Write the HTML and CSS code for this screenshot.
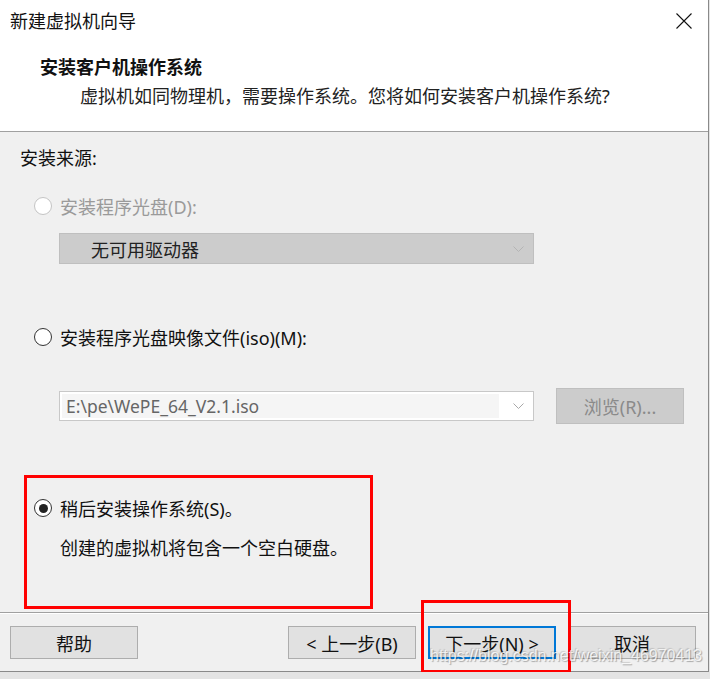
FILE: index.html
```html
<!DOCTYPE html>
<html lang="zh-CN">
<head>
    <meta charset="UTF-8">
    <meta name="viewport" content="width=device-width, initial-scale=1.0">
    <title>新建虚拟机向导</title>
    <link rel="stylesheet" href="styles.css">
</head>
<body>

    <div class="window">

        <!-- Header -->
        <header class="header">
            <div class="titlebar">
                <span class="title">新建虚拟机向导</span>
                <svg class="close" width="16" height="16" viewBox="0 0 16 16">
                    <path d="M0.5 0.5 L15.5 15.5 M15.5 0.5 L0.5 15.5" stroke="#111" stroke-width="1.1" fill="none"/>
                </svg>
            </div>
            <div class="heading">安装客户机操作系统</div>
            <div class="subtitle">虚拟机如同物理机，需要操作系统。您将如何安装客户机操作系统?</div>
        </header>

        <!-- Options -->
        <section class="content">
            <div class="source-label">安装来源:</div>

            <div class="radio-row disabled row-disc">
                <span class="radio"></span>
                <span class="label">安装程序光盘(D):</span>
            </div>
            <div class="select">
                <span class="select-text">无可用驱动器</span>
                <svg class="arrow" width="11" height="6" viewBox="0 0 11 6">
                    <polyline points="0.5,0.5 5.5,5.5 10.5,0.5" stroke="#b4b4b4" fill="none"/>
                </svg>
            </div>

            <div class="radio-row row-iso">
                <span class="radio"></span>
                <span class="label">安装程序光盘映像文件(iso)(M):</span>
            </div>
            <div class="combo-row">
                <div class="combo">
                    <span class="combo-field">E:\pe\WePE_64_V2.1.iso</span>
                    <svg class="arrow" width="11" height="6" viewBox="0 0 11 6">
                        <polyline points="0.5,0.5 5.5,5.5 10.5,0.5" stroke="#a8a8a8" fill="none"/>
                    </svg>
                </div>
                <div class="browse">浏览(R)...</div>
            </div>

            <div class="later-box">
                <div class="radio-row">
                    <span class="radio checked"></span>
                    <span class="label">稍后安装操作系统(S)。</span>
                </div>
                <div class="later-note">创建的虚拟机将包含一个空白硬盘。</div>
            </div>
        </section>

        <!-- Footer buttons -->
        <footer class="footer">
            <button class="btn">帮助</button>
            <div class="footer-right">
                <button class="btn">&lt; 上一步(B)</button>
                <button class="btn btn-default">下一步(N) &gt;</button>
                <button class="btn">取消</button>
            </div>
        </footer>

        <div class="mark-next"></div>
        <div class="watermark">https://blog.csdn.net/weixin_46970413</div>
    </div>

</body>
</html>
```

FILE: styles.css
```css
/* General Styles */
body {
    margin: 0;
    padding: 0;
    background-color: #e4e4e4;
    font-family: "Noto Sans", "Noto Sans CJK SC", sans-serif;
    font-size: 18px;
    color: #111;
}

.window {
    position: relative;
    width: 708px;
    height: 671px;
    background-color: #f0f0f0;
    border-right: 1px solid #8a8a8a;
    border-bottom: 1px solid #8a8a8a;
}

/* Header */
.header {
    height: 131px;
    background-color: #fff;
    border-bottom: 1px solid #a0a0a0;
}

.titlebar {
    height: 42px;
    display: flex;
    align-items: center;
    justify-content: space-between;
    padding: 0 16px 0 10px;
}

.title {
    line-height: 24px;
}

.heading {
    margin: 13px 0 0 40px;
    line-height: 24px;
    font-weight: bold;
}

.subtitle {
    margin: 5px 0 0 80px;
    line-height: 24px;
    color: #222;
}

/* Options */
.content {
    height: 480px;
    padding-left: 20px;
}

.source-label {
    padding-top: 14px;
    line-height: 24px;
}

.radio-row {
    display: flex;
    align-items: center;
    height: 24px;
    margin-left: 14px;
}

.row-disc {
    margin-top: 24px;
}

.row-iso {
    margin-top: 61px;
}

.radio {
    box-sizing: border-box;
    width: 18px;
    height: 18px;
    border: 1px solid #333;
    border-radius: 50%;
    background-color: #fff;
    margin-right: 8px;
    display: flex;
    align-items: center;
    justify-content: center;
}

.radio.checked::after {
    content: "";
    width: 9px;
    height: 9px;
    border-radius: 50%;
    background-color: #222;
}

.disabled .radio {
    border-color: #c4c4c4;
}

.disabled .label {
    color: #9a9a9a;
}

/* Disabled drive select */
.select {
    box-sizing: border-box;
    margin: 15px 0 0 39px;
    width: 475px;
    height: 31px;
    background-color: #cccccc;
    border: 1px solid #bfbfbf;
    display: flex;
    align-items: center;
    justify-content: space-between;
    padding: 0 9px 0 31px;
}

.select-text {
    color: #222;
}

/* ISO combo */
.combo-row {
    display: flex;
    align-items: center;
    height: 36px;
    margin-top: 39px;
}

.combo {
    box-sizing: border-box;
    margin-left: 39px;
    width: 475px;
    height: 30px;
    background-color: #fff;
    border: 1px solid #c8c8c8;
    display: flex;
    align-items: center;
    padding: 2px 9px 2px 2px;
}

.combo-field {
    flex: 1;
    height: 100%;
    margin-right: 14px;
    padding-left: 4px;
    background-color: #f5f5f5;
    color: #666;
    font-size: 17.5px;
    line-height: 24px;
}

.browse {
    box-sizing: border-box;
    margin-left: 22px;
    width: 128px;
    height: 36px;
    background-color: #cccccc;
    border: 1px solid #bfbfbf;
    color: #8a8a8a;
    display: flex;
    align-items: center;
    justify-content: center;
}

/* Install later, framed in red */
.later-box {
    box-sizing: border-box;
    margin: 51px 0 0 4px;
    width: 349px;
    height: 134px;
    border: 3px solid #ff0000;
    padding-top: 18px;
}

.later-box .radio-row {
    margin-left: 7px;
}

.later-note {
    margin: 16px 0 0 33px;
    line-height: 24px;
}

/* Footer */
.footer {
    height: 58px;
    border-top: 1px solid #a0a0a0;
    box-shadow: inset 0 1px 0 #fff;
    display: flex;
    align-items: flex-start;
    justify-content: space-between;
    padding: 13px 12px 0 10px;
    box-sizing: border-box;
}

.footer-right {
    display: flex;
    gap: 12px;
}

.btn {
    box-sizing: border-box;
    width: 128px;
    height: 33px;
    background-color: #e1e1e1;
    border: 1px solid #adadad;
    font-family: inherit;
    font-size: 18px;
    color: #111;
    padding: 0;
}

.btn-default {
    border: 2px solid #0078d7;
}

/* Annotation over the next button */
.mark-next {
    position: absolute;
    left: 421px;
    top: 600px;
    width: 150px;
    height: 73px;
    box-sizing: border-box;
    border: 3px solid #ff0000;
}

.watermark {
    position: absolute;
    left: 430px;
    top: 647px;
    font-family: "Liberation Sans", Arial, sans-serif;
    font-size: 16px;
    color: rgba(255, 255, 255, 0.8);
    text-shadow: 1px 1px 1px rgba(0, 0, 0, 0.3), -1px -1px 1px rgba(0, 0, 0, 0.15);
    white-space: nowrap;
}
```
